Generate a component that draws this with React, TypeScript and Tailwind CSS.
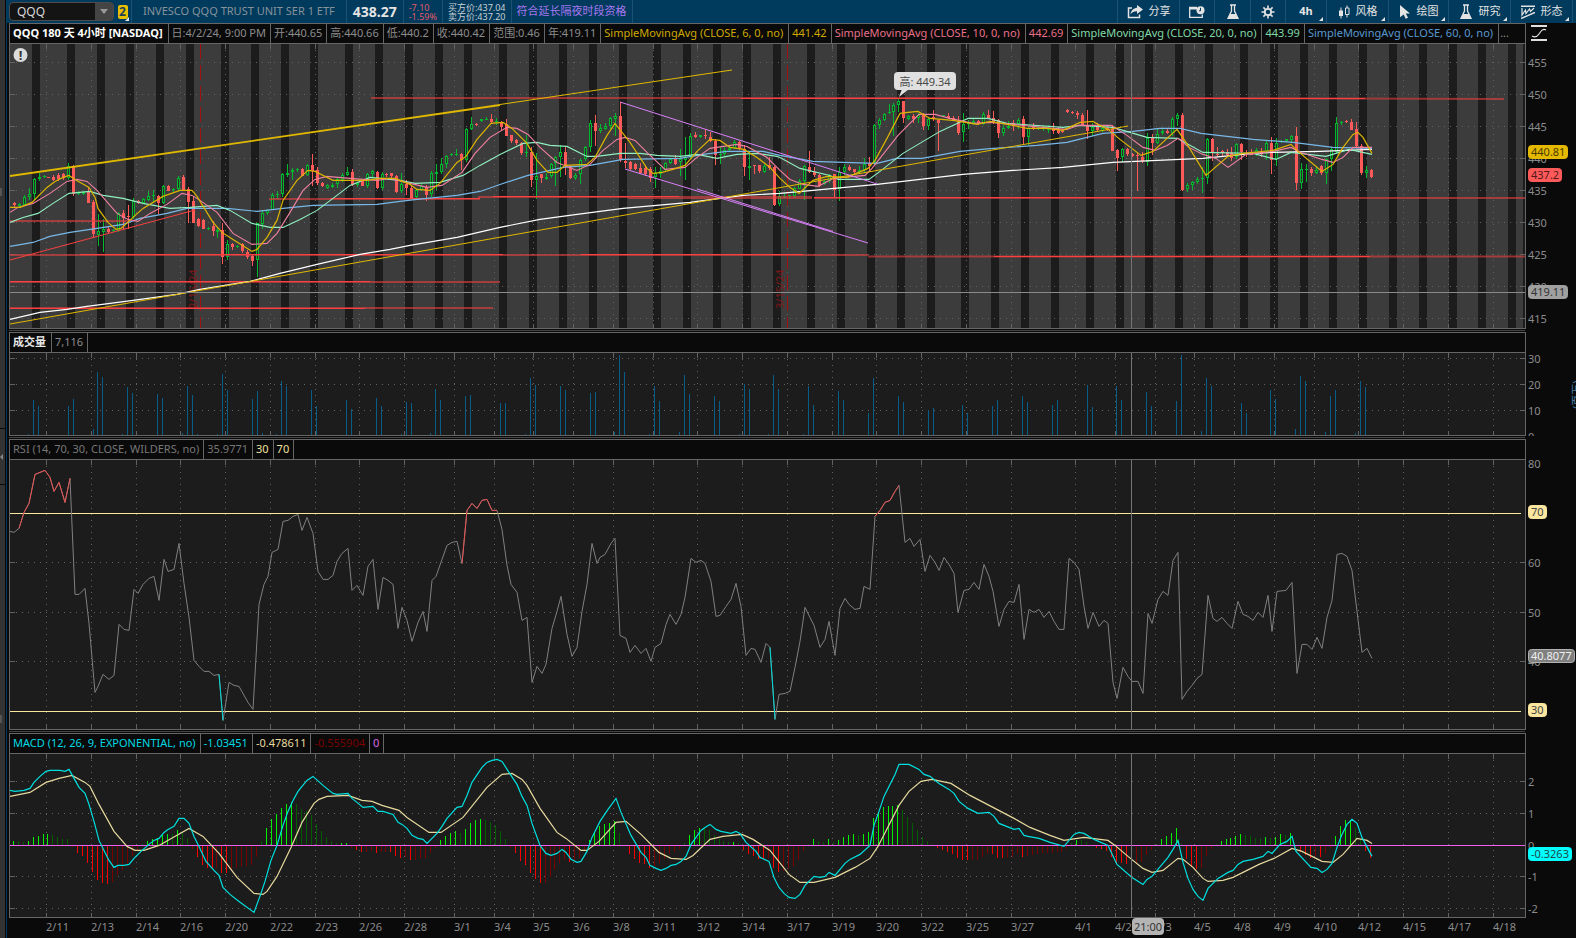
import type { ReactNode } from "react"

const BAR_START = 13.7
const BAR_STEP = 4.9706
const PLOT_LEFT = 10
const AXIS_LEFT = 1526
const CROSS_X = 1131.5

const barX = (i: number) => Math.floor(BAR_START + BAR_STEP * i + 0.5)

const DATES: [number, string][] = [
  [46, "2/11"], [91, "2/13"], [136, "2/14"], [180, "2/16"], [225, "2/20"], [270, "2/22"],
  [315, "2/23"], [359, "2/26"], [404, "2/28"], [454, "3/1"], [494, "3/4"], [533, "3/5"],
  [573, "3/6"], [613, "3/8"], [653, "3/11"], [697, "3/12"], [742, "3/14"], [787, "3/17"],
  [832, "3/19"], [876, "3/20"], [921, "3/22"], [966, "3/25"], [1011, "3/27"], [1075, "4/1"],
  [1115, "4/2"], [1155, "4/3"], [1194, "4/5"], [1234, "4/8"], [1274, "4/9"], [1314, "4/10"],
  [1358, "4/12"], [1403, "4/15"], [1448, "4/17"], [1493, "4/18"],
]

// left edge of every overnight gap, each 8px wide
const NIGHTS = [
  32, 67, 97, 126, 156, 186, 221, 251, 281, 310, 345, 375, 405, 435, 464, 499, 529, 559, 589, 619,
  653, 683, 713, 743, 773, 807, 837, 867, 897, 927, 961, 991, 1021, 1051, 1086, 1116, 1145, 1175,
  1205, 1240, 1270, 1300, 1329, 1359, 1389, 1419, 1449, 1478, 1508, 1523,
]

// up flag, high, body top, body bottom, low. Values are thirds of a pixel below y=60
const CANDLES = `
0,426,430,437,440 1,428,431,437,439 1,406,411,434,436 1,385,403,413,420 1,355,358,404,420
1,338,351,357,362 1,346,349,353,356 0,350,351,353,354 0,344,351,359,362 0,338,344,357,362
0,338,343,356,360 1,310,319,356,362 0,316,320,400,410 1,394,399,402,406 1,392,396,401,404
0,385,397,429,430 0,420,427,524,535 1,463,514,525,560 1,478,508,517,578 0,500,507,516,518
1,508,511,515,517 1,455,460,513,516 0,450,459,473,510 0,436,469,472,507 1,415,423,471,478
0,420,423,428,432 1,413,417,428,430 1,393,408,420,422 1,390,406,410,425 0,405,408,430,462
1,375,378,429,432 0,376,378,392,395 1,383,387,391,397 1,348,355,388,392 0,345,350,388,392
0,382,388,426,490 0,408,422,488,490 0,474,476,498,500 0,478,480,507,508 1,500,504,507,510
0,483,499,514,528 1,505,511,517,536 0,490,510,591,614 1,540,552,591,600 0,550,552,562,572
1,556,559,563,566 0,550,553,575,580 0,570,575,591,598 0,582,588,603,618 1,488,490,602,650
1,450,459,491,508 1,446,450,460,464 1,400,405,450,452 1,392,402,406,415 1,340,343,402,412
1,312,338,343,352 1,325,330,337,362 1,324,328,331,335 0,325,327,347,350 1,312,315,346,348
0,282,315,333,378 0,320,331,371,374 0,366,370,378,380 1,372,376,384,386 1,368,374,381,383
1,352,357,373,384 1,338,344,358,366 1,322,337,345,350 0,327,336,374,378 1,366,370,376,380
0,358,363,378,380 1,338,342,378,382 1,330,334,343,354 0,333,336,384,388 1,336,342,384,390
0,338,343,346,350 0,338,340,348,354 0,345,348,396,398 1,338,373,395,398 0,360,373,386,406
0,375,384,413,416 1,388,391,413,414 1,372,378,390,392 0,375,380,405,422 1,332,340,403,410
1,312,336,342,390 1,295,311,335,342 1,284,287,311,322 1,280,283,286,290 1,268,282,285,288
0,280,283,302,330 1,204,208,302,306 1,170,192,208,210 0,190,193,197,200 1,176,178,184,186
1,172,177,179,181 0,163,178,186,192 1,175,183,187,196 0,182,185,200,210 0,178,192,227,230
0,224,226,245,248 0,238,241,250,256 0,246,250,281,284 1,225,277,281,292 0,262,277,362,382
1,280,347,360,418 0,341,343,356,368 1,338,350,355,358 1,308,313,348,352 1,288,292,311,378
1,256,277,293,353 0,262,276,317,345 0,316,318,353,358 1,340,344,353,362 1,296,301,343,370
1,258,262,298,302 1,180,190,263,275 0,165,190,215,258 1,192,205,215,220 1,190,197,205,210
1,170,174,198,206 1,160,167,176,230 0,126,169,300,306 0,250,303,309,324 0,304,307,329,332
0,310,312,327,330 0,308,325,339,342 0,315,324,341,348 0,322,326,352,366 1,320,339,352,382
1,322,332,341,356 1,305,310,330,332 1,295,298,311,314 0,286,298,313,316 1,268,298,308,350
1,232,290,299,362 1,218,227,290,293 0,215,226,231,233 1,224,226,232,234 0,208,226,230,238
0,215,232,243,246 0,238,242,284,315 1,260,281,285,310 1,262,271,282,290 1,258,264,271,275
1,240,247,265,268 0,244,246,268,272 0,255,268,323,348 1,280,317,323,362 0,314,316,318,340
0,314,316,335,338 1,310,317,335,340 0,290,316,325,330 0,318,321,435,438 1,392,409,434,436
1,400,407,410,414 1,405,406,410,418 1,380,385,408,412 1,358,362,385,388 1,314,318,362,418
0,273,321,335,338 0,320,336,345,350 0,343,345,378,382 1,360,364,374,376 1,342,345,362,370
0,342,343,390,412 1,322,336,388,424 1,312,322,337,344 0,315,320,329,332 0,326,327,336,340
1,318,330,336,342 1,294,311,330,338 0,290,308,318,336 1,192,196,310,316 1,175,181,197,208
1,160,163,181,184 1,132,156,160,162 1,130,136,156,230 1,115,124,136,156 0,122,124,176,188
1,166,169,177,180 0,162,168,177,188 1,160,166,175,190 0,160,163,198,210 1,170,177,198,208
0,150,172,179,182 0,178,180,188,275 1,164,166,169,171 0,160,168,174,178 0,168,174,182,184
0,168,182,218,226 1,160,193,218,246 1,180,187,192,206 1,178,184,191,196 0,180,183,193,195
1,156,163,192,194 0,150,164,175,178 0,152,173,185,190 0,178,181,219,236 1,196,203,218,228
1,183,197,203,208 0,180,189,193,212 1,174,179,192,206 0,168,178,231,255 1,198,203,231,254
0,190,200,206,212 1,198,202,206,209 1,195,203,206,214 1,194,203,209,218 0,188,203,213,222
0,200,206,219,222 0,207,213,217,219 0,147,151,156,160 0,152,155,159,162 0,152,158,164,176
0,160,165,196,200 0,150,195,212,238 1,190,201,213,228 0,190,200,210,216 1,198,204,212,216
0,194,204,209,212 0,196,206,272,275 0,268,271,294,334 1,265,268,293,306 0,265,268,282,288
0,280,283,288,292 0,278,284,288,392 0,276,291,302,308 1,220,234,305,320 0,222,234,249,284
1,205,221,249,252 1,208,213,220,226 0,205,213,219,222 1,172,176,218,230 1,160,165,176,200
0,160,165,390,395 1,368,374,387,394 1,363,367,377,390 1,352,358,367,374 1,322,354,356,400
1,234,238,356,372 0,234,237,275,304 0,260,282,286,290 0,270,274,280,290 0,268,276,284,290
0,262,280,296,305 1,248,253,293,296 0,248,253,278,300 0,270,278,282,292 0,268,275,283,286
1,264,271,284,288 0,264,272,280,292 1,244,249,276,300 0,232,249,299,342 1,234,248,296,318
1,240,242,245,250 1,236,238,243,246 1,226,229,240,246 0,202,228,368,392 1,310,326,368,388
1,312,326,329,365 0,322,326,338,350 1,318,330,339,342 0,314,319,341,343 1,293,298,341,370
1,262,268,298,334 1,172,190,276,280 1,182,186,190,194 0,180,184,188,190 0,178,187,210,212
0,185,208,258,260 0,253,257,339,345 1,318,331,340,354 0,328,330,352,354`
  .trim()
  .split(/\s+/)
  .map((c) => c.split(",").map(Number))

const SMA6 =
  "10,207 20,207 32,202 47,187 55,181 63,177 69,175 75,179 89,187 95,197 98,208 108,222 116,229 121,228 133,217 143,208 163,196 180,190 192,190 197,196 205,209 213,222 222,232 233,239 252,251 257,249 267,237 277,220 283,200 297,180 308,170 315,171 333,180 350,180 367,180 380,178 395,178 410,184 417,189 430,190 440,183 457,162 466,156 477,139 491,123 503,122 512,128 527,143 537,160 548,172 557,172 565,165 587,164 595,157 607,135 615,123 630,142 647,168 653,173 662,172 673,169 685,165 697,151 710,139 720,140 730,147 744,149 757,157 770,167 780,178 790,187 799,193 813,180 827,176 847,177 868,168 875,160 887,138 900,113 908,112 918,111 930,118 953,120 977,124 990,121 1013,125 1027,128 1047,128 1063,130 1080,122 1093,121 1100,125 1108,129 1120,139 1141,155 1153,151 1167,138 1177,129 1186,142 1206,175 1228,156 1243,153 1273,150 1291,144 1298,151 1322,171 1333,164 1343,147 1353,134 1358,132 1363,137 1372,153"
const SMA10 =
  "10,212 18,207 33,203 50,193 67,181 77,179 87,181 97,190 117,213 128,219 138,221 150,213 167,204 182,193 192,195 200,200 217,212 233,233 252,244 267,243 277,233 290,212 303,190 315,179 327,176 350,178 377,180 390,178 410,183 427,187 442,185 462,172 475,153 490,137 507,127 517,128 528,134 540,147 557,162 577,170 590,164 603,150 617,139 625,137 635,140 648,153 665,169 685,167 697,157 710,148 737,144 747,146 767,157 780,170 790,179 803,184 818,186 833,178 865,175 872,168 898,135 919,114 935,114 950,118 973,123 990,122 1013,124 1053,128 1067,129 1078,125 1111,125 1127,135 1143,147 1155,150 1167,145 1178,138 1189,147 1203,154 1216,158 1228,167 1246,154 1273,151 1291,147 1301,152 1322,159 1333,162 1343,157 1353,147 1372,147"
const SMA20 =
  "10,222 23,217 38,213 53,203 69,193 90,191 103,195 123,198 143,203 170,208 190,207 217,205 230,210 252,223 270,227 283,227 300,219 317,210 333,198 350,185 370,177 400,180 415,183 440,182 463,175 480,165 500,154 523,143 537,142 550,145 567,146 587,156 597,156 620,153 640,153 657,155 680,156 697,154 717,158 737,154 757,153 777,156 780,157 800,168 830,175 838,179 869,179 880,171 903,153 940,131 957,123 968,118 988,118 1007,123 1063,127 1080,125 1113,127 1130,132 1147,137 1178,138 1183,141 1203,152 1253,153 1276,159 1291,152 1326,156 1349,149 1372,154"
const SMA60 =
  "10,246 33,242 50,236 70,232 97,228 123,224 140,218 167,213 187,208 227,208 257,211 283,208 313,205 377,204 400,201 417,199 457,195 480,191 500,184 528,175 563,167 590,165 623,159 680,158 703,154 727,151 763,151 780,155 813,161 843,162 877,163 897,158 922,158 960,151 993,148 1037,145 1067,142 1103,133 1133,131 1160,128 1180,128 1201,133 1253,139 1293,142 1333,147 1372,148"
const SMA200 =
  "10,319 40,312 67,309 87,306 133,300 177,294 200,289 250,281 280,273 317,264 360,254 390,249 410,245 457,237 500,227 540,219 577,214 623,208 690,202 743,195 780,193 813,190 877,184 963,174 1013,170 1063,167 1113,162 1180,159 1203,158 1253,153 1273,152 1320,151 1372,149"

// x, y of the bar top
const VOLUMES =
  "28,434 33,400 38,406 68,406 73,399 93,429 97,372 102,377 122,434 127,387 132,393 157,394 162,398 182,433 187,386 192,395 197,434 217,434 222,374 227,390 252,399 257,391 262,433 276,434 281,381 286,386 311,390 316,406 346,400 351,409 376,398 381,406 401,434 406,402 411,403 430,433 435,389 440,400 465,396 470,395 500,403 505,403 525,434 530,378 535,385 560,386 565,390 590,393 595,392 614,432 619,355 624,372 649,434 654,386 659,401 679,432 684,375 689,394 714,396 719,401 739,434 744,384 749,389 768,434 773,375 778,389 803,434 808,386 813,405 838,391 843,400 868,413 873,378 898,396 903,402 928,410 933,408 962,405 967,413 992,406 997,400 1022,396 1027,402 1052,405 1057,400 1087,385 1092,407 1116,386 1121,400 1146,392 1151,406 1176,401 1181,355 1201,431 1206,378 1211,386 1241,403 1246,413 1270,390 1275,399 1295,429 1300,376 1305,381 1325,432 1330,396 1335,390 1355,433 1360,381 1365,387"

const RSI =
  "10,531 14,532 19,528 24,512 29,503 35,474 40,472 45,470 50,477 54,491 59,482 65,502 70,478 75,594 79,594 85,588 89,623 95,692 98,686 103,674 109,679 114,675 119,624 124,629 129,630 134,589 138,593 143,584 149,578 154,576 159,600 164,559 168,571 174,569 179,543 184,583 189,617 194,660 199,666 204,671 209,671 214,675 219,674 223,720 229,682 234,685 239,686 248,702 253,709 259,604 264,584 268,576 272,552 278,549 283,521 288,520 293,516 298,514 302,530 307,517 313,533 318,571 323,579 328,579 333,575 337,561 342,553 348,548 352,590 357,585 363,595 368,566 373,559 378,609 383,577 388,580 393,584 398,628 402,607 407,620 412,641 418,622 423,611 427,631 432,580 436,576 442,559 447,545 452,542 457,541 462,563 467,510 472,503 477,508 482,500 487,499 492,510 497,510 502,529 507,565 511,584 517,592 522,620 527,617 532,682 537,666 542,673 546,664 552,628 557,611 561,596 567,634 572,656 577,647 582,611 587,584 592,543 597,563 600,557 605,554 611,543 615,538 620,635 626,638 630,652 635,645 641,653 646,648 651,661 655,647 661,643 666,624 670,614 676,624 681,614 685,597 691,558 696,562 701,560 705,563 711,581 716,616 720,615 726,606 731,599 736,583 741,606 746,655 751,648 755,649 761,662 766,643 770,647 775,719 779,694 785,693 790,691 795,667 800,641 805,607 810,617 814,625 820,647 825,639 829,621 835,655 840,608 845,598 849,604 855,609 860,608 864,586 870,589 875,516 880,510 885,502 890,500 895,491 899,485 905,542 910,538 914,546 920,539 925,571 930,555 935,562 939,570 944,557 949,564 954,573 958,612 964,590 969,589 974,582 979,589 984,564 989,576 993,591 999,626 1004,609 1009,601 1014,602 1019,584 1024,639 1029,609 1034,612 1039,609 1044,617 1049,611 1054,621 1059,629 1064,629 1069,558 1074,562 1079,569 1084,606 1088,628 1093,612 1099,626 1104,620 1108,623 1113,682 1117,698 1123,667 1128,676 1132,681 1138,681 1143,693 1148,613 1152,623 1158,599 1163,591 1168,595 1173,560 1178,552 1182,699 1187,691 1192,685 1197,678 1202,674 1208,595 1213,618 1217,621 1222,617 1227,623 1232,628 1238,601 1243,614 1248,616 1253,620 1258,612 1263,617 1268,595 1272,631 1277,591 1286,590 1292,582 1297,673 1302,644 1307,644 1312,649 1317,637 1322,648 1327,617 1332,600 1337,554 1342,553 1347,556 1352,570 1362,652 1367,648 1372,658"
const RSI_HIGH = [
  "19,528 24,512 29,503 35,474 40,472 45,470 50,477 54,491 59,482 65,502 70,478",
  "462,563 467,510 472,503 477,508 482,500 487,499 492,510 497,510",
  "875,516 880,510 885,502 890,500 895,491 899,485",
]
const RSI_LOW = ["219,674 223,720", "770,647 775,719"]

const MACD =
  "10,790 15,791 24,790 30,788 34,782 40,776 46,771 50,770 60,770 65,771 69,769 74,778 79,787 85,793 89,804 94,821 99,840 104,850 109,860 114,867 118,865 124,865 129,864 134,858 141,851 149,844 154,840 159,838 164,832 168,829 174,826 179,818 184,818 189,823 194,836 199,846 206,861 214,870 219,875 223,887 230,894 239,901 254,912 261,893 265,881 271,860 277,845 283,825 288,811 293,800 298,791 302,786 307,780 313,776 323,785 333,793 337,794 348,793 352,798 357,802 363,807 373,806 378,811 383,811 393,814 398,822 402,824 407,828 412,835 418,838 423,839 427,843 437,833 442,826 447,818 457,807 462,806 467,795 472,782 482,767 487,762 492,760 497,759 502,761 509,772 517,784 522,796 527,805 532,823 540,845 546,853 551,855 557,853 562,849 566,852 571,859 577,862 581,861 587,851 592,837 600,821 608,809 616,798 621,812 631,835 641,852 646,857 650,865 656,868 661,870 666,868 671,865 676,864 681,861 686,856 691,844 701,830 705,827 710,824 716,829 721,831 731,833 736,831 740,833 746,842 756,851 760,857 769,861 774,877 779,887 784,893 789,897 795,898 800,894 805,885 814,876 820,877 825,876 829,872 835,875 845,863 850,859 860,854 870,845 874,825 879,811 884,796 895,774 899,764 909,764 919,769 924,774 930,776 939,783 949,789 954,793 959,801 968,808 978,813 989,812 994,816 999,823 1009,827 1014,829 1019,828 1024,835 1028,836 1039,838 1050,842 1064,846 1074,834 1079,832 1084,833 1094,839 1108,845 1117,864 1132,877 1143,884 1147,879 1152,876 1168,857 1173,849 1178,840 1183,862 1188,878 1193,889 1198,896 1203,900 1208,888 1213,883 1218,878 1228,872 1233,870 1238,864 1243,861 1253,859 1263,856 1268,851 1272,853 1280,844 1287,841 1292,836 1296,851 1311,867 1317,868 1322,872 1327,869 1332,863 1337,847 1342,834 1347,824 1352,819 1357,823 1362,837 1372,856"
const SIGNAL =
  "10,796 30,792 46,782 59,778 72,775 85,782 90,786 99,804 114,831 127,846 135,850 144,850 159,845 189,828 203,836 219,853 237,877 254,893 263,894 267,891 277,876 291,847 302,822 314,803 319,799 327,796 348,795 362,800 372,801 382,805 399,810 407,817 429,832 441,832 463,817 487,787 502,774 512,773 522,779 527,785 540,808 557,832 566,838 581,850 587,850 599,841 616,822 626,821 641,834 659,852 671,858 686,859 693,855 710,839 723,836 742,834 753,839 770,850 789,874 800,882 814,882 835,877 855,867 870,858 878,846 899,805 909,791 921,781 932,779 951,783 970,795 993,807 1014,818 1030,827 1050,835 1064,840 1084,837 1108,840 1115,845 1128,856 1143,868 1152,872 1163,870 1178,858 1183,859 1193,867 1203,878 1208,881 1223,880 1233,877 1259,864 1274,858 1292,848 1302,851 1322,861 1333,862 1343,854 1357,838 1367,840 1372,843"

const parse = (s: string) => s.split(" ").map((p) => p.split(",").map(Number))

function valueAt(points: number[][], x: number) {
  const i = points.findIndex((p) => p[0] >= x)
  if (i <= 0) return points[i < 0 ? points.length - 1 : 0][1]
  const [x0, y0] = points[i - 1]
  const [x1, y1] = points[i]
  return y0 + ((y1 - y0) * (x - x0)) / (x1 - x0)
}

// histogram = macd line minus signal line, bright while it moves away from zero
const macdPoints = parse(MACD)
const signalPoints = parse(SIGNAL)
const HISTOGRAM = CANDLES.map((_, i) => {
  const x = barX(i)
  return { x, v: valueAt(signalPoints, x) - valueAt(macdPoints, x) }
}).map((b, i, all) => {
  const growing = i === 0 || Math.abs(b.v) >= Math.abs(all[i - 1].v)
  const color = b.v > 0 ? (growing ? "#00f000" : "#006000") : growing ? "#f80000" : "#780000"
  return { ...b, color }
})

function Line({ points, color, width = 1 }: { points: string; color: string; width?: number }) {
  return <polyline points={points} fill="none" stroke={color} strokeWidth={width} transform="translate(0 .4)" />
}

interface PlotProps {
  top: number
  height: number
  className: string
  levels: number[]
  label: string
  back?: ReactNode
  children: ReactNode
}

function Plot({ top, height, className, levels, label, back, children }: PlotProps) {
  return (
    <svg className={`block w-full bg-[#1c1c1c] ${className}`} role="img" aria-label={label}>
      <g transform={`translate(${-PLOT_LEFT} ${-top})`}>
        {back}
        <g shapeRendering="crispEdges" stroke="#626262">
          {DATES.map(([x]) => (
            <g key={x}>
              <line x1={x + 0.5} x2={x + 0.5} y1={top} y2={top + height} strokeDasharray="1 5" />
              <line x1={x + 0.5} x2={x + 0.5} y1={top} y2={top + 5} />
              <line x1={x + 0.5} x2={x + 0.5} y1={top + height - 4} y2={top + height} />
            </g>
          ))}
          {levels.map((y) => (
            <g key={y}>
              <line x1={PLOT_LEFT} x2="101%" y1={y + 0.5} y2={y + 0.5} strokeDasharray="1 5" />
              <line x1={PLOT_LEFT} x2={PLOT_LEFT + 5} y1={y + 0.5} y2={y + 0.5} />
            </g>
          ))}
        </g>
        {children}
        <line x1={CROSS_X} x2={CROSS_X} y1={top} y2={top + height} stroke="#747474" />
      </g>
      <g transform={`translate(-5 ${-top})`} stroke="#626262" shapeRendering="crispEdges">
        {levels.map((y) => (
          <line key={y} x1="100%" x2="101%" y1={y + 0.5} y2={y + 0.5} />
        ))}
      </g>
    </svg>
  )
}

interface Badge {
  y: number
  text: string
  width: number
  fill: string
  color: string
  stroke?: string
}

interface AxisProps {
  top: number
  className: string
  ticks: [number, string][]
  badges?: Badge[]
  children?: ReactNode
}

function Axis({ top, className, ticks, badges = [], children }: AxisProps) {
  return (
    <svg className={`block w-[50px] shrink-0 text-[11px] ${className}`}>
      <g transform={`translate(${-AXIS_LEFT} ${-top})`}>
        {ticks.map(([y, text]) => (
          <text key={text} x={1528} y={y + 5} fill="#8c8c8c">
            {text}
          </text>
        ))}
        {badges.map((b) => (
          <g key={b.text}>
            <rect
              x={1528.5}
              y={b.y + 0.5}
              width={b.width}
              height={13}
              rx={3}
              fill={b.fill}
              stroke={b.stroke ?? b.fill}
            />
            <text x={1531} y={b.y + 11} fill={b.color}>
              {b.text}
            </text>
          </g>
        ))}
        {children}
      </g>
    </svg>
  )
}

function Cell({ className, wide, children }: { className: string; wide?: boolean; children: ReactNode }) {
  return (
    <span
      className={`flex shrink-0 items-center border-r border-[#666] pb-[2px] pl-[3px] ${wide ? "pr-[5px]" : "pr-1"} ${className}`}
    >
      {children}
    </span>
  )
}

function Panel({ header, plot, axis }: { header: ReactNode; plot: ReactNode; axis: ReactNode }) {
  return (
    <section className="ml-[2px] flex">
      <div className="min-w-0 flex-1 border border-[#666]">
        <header className="flex h-5 overflow-hidden border-b border-[#666] text-[11px] leading-4 whitespace-nowrap">
          {header}
        </header>
        {plot}
      </div>
      {axis}
    </section>
  )
}

function Divider() {
  return (
    <div className="mr-[51px] ml-[2px] flex h-[3px] items-center">
      <div className="h-px w-full bg-[#444]" />
    </div>
  )
}

const Flask = () => (
  <svg className="h-4 w-[14px]" viewBox="0 0 14 16" aria-hidden="true">
    <path d="M4 1h6M5.500 1v6L2 14.300h10L8.500 7V1" fill="none" stroke="#e4e4e4" strokeWidth="1.300" />
    <path d="M4.300 10h5.400l2.600 5H1.700z" fill="#e4e4e4" />
  </svg>
)

const TOOLS: { label: string; width: string; text?: string; menu?: boolean; icon?: ReactNode }[] = [
  {
    label: "分享",
    text: "分享",
    width: "w-[62px]",
    icon: (
      <svg className="h-[14px] w-4" viewBox="0 0 16 14" aria-hidden="true">
        <path d="M5 3H1.500v9.500h11V9.500" fill="none" stroke="#e4e4e4" strokeWidth="1.500" />
        <path d="M10 0l6 4.500L10 9V6.300C7 6.200 5 7.200 3.500 9.500 4 5.500 6.500 3 10 2.700z" fill="#e4e4e4" />
      </svg>
    ),
  },
  {
    label: "计划",
    width: "w-[35px]",
    icon: (
      <svg className="h-3 w-4" viewBox="0 0 16 12" aria-hidden="true">
        <path d="M8 1.500H.7v9.800h12.600V8.500" fill="none" stroke="#e4e4e4" strokeWidth="1.300" />
        <path d="M1 1h7v2.500H1z" fill="#e4e4e4" />
        <circle cx="11.500" cy="4.200" r="4" fill="#e4e4e4" />
        <path d="M11.500 1.800v3h-1.500" fill="none" stroke="#003a5c" />
      </svg>
    ),
  },
  { label: "实验", width: "w-[36px]", icon: <Flask /> },
  {
    label: "设置",
    width: "w-[35px]",
    icon: (
      <svg className="h-[14px] w-[14px]" viewBox="0 0 14 14" aria-hidden="true">
        <circle cx="7" cy="7" r="3.200" fill="none" stroke="#e4e4e4" strokeWidth="1.800" />
        <path
          d="M7 .5v2.500M7 11v2.500M.5 7H3M11 7h2.500M2.400 2.400l1.800 1.800M9.800 9.800l1.800 1.800M2.400 11.600l1.800-1.800M9.800 4.200l1.800-1.800"
          stroke="#e4e4e4"
          strokeWidth="1.600"
        />
      </svg>
    ),
  },
  { label: "周期", text: "4h", width: "w-[41px]", menu: true },
  {
    label: "风格",
    text: "风格",
    width: "w-[62px]",
    menu: true,
    icon: (
      <svg className="h-[14px] w-3" viewBox="0 0 12 14" aria-hidden="true">
        <path d="M3 2.500v11M9 .5v12" stroke="#e4e4e4" />
        <path d="M1 5.500h4v5.500H1z" fill="#e4e4e4" />
        <path d="M7.500 3h3.500v6.500H7.500z" fill="#003a5c" stroke="#e4e4e4" />
      </svg>
    ),
  },
  {
    label: "绘图",
    text: "绘图",
    width: "w-[60px]",
    menu: true,
    icon: (
      <svg className="h-[14px] w-3" viewBox="0 0 12 14" aria-hidden="true">
        <path d="M1 0l10 8.500H6.800l2.200 4.300-2.300 1-2-4.400L1 12.300z" fill="#e4e4e4" />
      </svg>
    ),
  },
  { label: "研究", text: "研究", width: "w-[62px]", menu: true, icon: <Flask /> },
  {
    label: "形态",
    text: "形态",
    width: "w-[62px]",
    menu: true,
    icon: (
      <svg className="h-[14px] w-[14px]" viewBox="0 0 14 14" aria-hidden="true">
        <path d="M0 1.200h14M0 13.500l14-6" stroke="#e4e4e4" strokeWidth="1.500" />
        <path d="M1 3v7l3.500-5 .5 3.500L8.500 4l1 2.500L13 3" fill="none" stroke="#e4e4e4" strokeWidth="1.200" />
      </svg>
    ),
  },
]

function Toolbar() {
  return (
    <div className="flex h-[23px] items-stretch overflow-hidden bg-[#003a5c] pr-[3px] pl-[2px] whitespace-nowrap">
      <div className="my-[2px] flex w-[105px] shrink-0 items-center rounded-sm border border-[#4c4c4c] bg-[#141414]">
        <input
          aria-label="代码"
          defaultValue="QQQ"
          className="w-[85px] bg-transparent pl-[7px] text-xs leading-4 text-[#d8d8d8] outline-none"
        />
        <button aria-label="选择代码" className="flex h-full flex-1 items-center justify-center bg-[#444]">
          <svg className="h-[5px] w-2" viewBox="0 0 8 5" aria-hidden="true">
            <path d="M0 0h8L4 5z" fill="#999" />
          </svg>
        </button>
      </div>
      <button
        aria-label="关联组 2"
        className="relative flex w-[18px] shrink-0 items-center justify-center border-r border-[#1b5273]"
      >
        <span className="flex h-[14px] w-[10px] items-center justify-center rounded-xs bg-[#e8c000] text-xs leading-3 font-bold text-[#1f3f52]">
          2
        </span>
        <i className="absolute right-[2px] bottom-[2px] h-1 w-1 bg-[#e4e4e4] [clip-path:polygon(100%_0,100%_100%,0_100%)]" />
      </button>
      <span className="flex shrink-0 items-center border-r border-[#1b5273] px-[11px] text-[11px] text-[#87939b]">
        INVESCO QQQ TRUST UNIT SER 1 ETF
      </span>
      <strong className="flex shrink-0 items-center border-r border-[#1b5273] px-[6px] text-sm text-[#e4e4e4]">
        438.27
      </strong>
      <span className="flex shrink-0 flex-col justify-center border-r border-[#1b5273] px-[5px] text-[9px] leading-[9px] text-[#e05a68]">
        <span>-7.10</span>
        <span>-1.59%</span>
      </span>
      <span className="flex shrink-0 flex-col justify-center border-r border-[#1b5273] px-[5px] text-[9px] leading-[9px] text-[#c8d0d4]">
        <span>买方价:437.04</span>
        <span>卖方价:437.20</span>
      </span>
      <span className="flex shrink-0 items-center border-r border-[#1b5273] px-[5px] text-[11px] text-[#a878f0]">
        符合延长隔夜时段资格
      </span>
      <div className="ml-auto flex shrink-0 border-l border-[#1b5273]">
        {TOOLS.map((t) => (
          <button
            key={t.label}
            aria-label={t.label}
            className={`relative flex items-center justify-center gap-[6px] border-r border-[#1b5273] text-[11px] text-[#e4e4e4] ${t.width}`}
          >
            {t.icon}
            {t.text && <span className={t.text === "4h" ? "font-bold" : ""}>{t.text}</span>}
            {t.menu && (
              <i className="absolute right-[3px] bottom-[2px] h-1 w-1 bg-[#e4e4e4] [clip-path:polygon(100%_0,100%_100%,0_100%)]" />
            )}
          </button>
        ))}
      </div>
    </div>
  )
}

function PricePlot() {
  return (
    <Plot
      top={44}
      height={284}
      className="h-[284px]"
      label="QQQ 4小时 K线"
      levels={[62, 94, 126, 158, 190, 222, 254, 286, 318]}
      back={
        <>
          <rect x={PLOT_LEFT} y={44} width="100%" height={284} fill="#3c3c3c" />
          {NIGHTS.map((x) => (
            <rect key={x} x={x} y={44} width={8} height={284} fill="#1c1c1c" />
          ))}
        </>
      }
    >
      {/* option expiration days */}
      <g stroke="#a01010" strokeDasharray="15 6">
        <line x1={200.5} x2={200.5} y1={44} y2={328} />
        <line x1={787.5} x2={787.5} y1={44} y2={328} />
      </g>
      <g fill="#801818" fontSize={11}>
        <text transform="translate(197 309) rotate(-90)">2/16/24</text>
        <text transform="translate(784 309) rotate(-90)">3/15/24</text>
      </g>

      <g shapeRendering="crispEdges">
        {CANDLES.map(([up, high, top, bottom, low], i) => {
          const x = barX(i)
          const color = up ? "#00b82e" : "#ff5a5a"
          const y = Math.round(60 + top / 3)
          const h = Math.max(1, Math.round((bottom - top) / 3))
          return (
            <g key={i} fill={color}>
              <rect x={x} y={Math.round(60 + high / 3)} width={1} height={Math.round((low - high) / 3)} />
              <rect x={x - 1} y={y} width={3} height={h} />
              {up === 1 && h > 2 && <rect x={x} y={y + 1} width={1} height={h - 2} fill="#2b2b2b" />}
            </g>
          )
        })}
      </g>

      <g stroke="#e84040" strokeOpacity={0.6} strokeWidth={2}>
        <path d="M371 98H1190L1504 99" />
        <path d="M269 199H480M478 197H812M628 198H812M814 198H1526" />
        <path d="M10 221H130M10 255H868" />
        <path d="M10 282H500M10 308H493" />
        <path d="M868 256.500H1526" />
      </g>
      <g stroke="#fa4040" strokeWidth={1}>
        <path d="M741 98.500H1365M814 197.500H1215" />
        <path d="M80 254.500H503M581 254.500H803M994 256.500H1370" />
        <path d="M10 281.500H370M10 308.500H365M493 196.500H679M330 198.500H480" />
        <path d="M10 260L195 210" />
      </g>

      <Line points={SMA200} color="#ffffff" width={1.1} />
      <Line points={SMA60} color="#78b8e8" width={1.1} />
      <Line points={SMA20} color="#90f0c0" width={1.1} />
      <Line points={SMA10} color="#f080a0" width={1.1} />
      <Line points={SMA6} color="#dcb400" width={1.2} />

      <g stroke="#e0b800">
        <path d="M10 176L500 105" strokeWidth={1.800} />
        <path d="M500 104.500L732 70M10 324L1128 126" />
      </g>
      <g stroke="#d880f8">
        <path d="M620 102L877 184M625 169L868 243M697 189L833 231.500" />
      </g>

      <line x1={PLOT_LEFT} x2="101%" y1={292.5} y2={292.5} stroke="#8a8a8a" />

      <circle cx={20.5} cy={55} r={7} fill="#dcdcdc" />
      <text x={20.5} y={59.5} textAnchor="middle" fontSize={13} fontWeight={700} fill="#333">
        !
      </text>
      <path d="M902 89L899 97L909 89z" fill="#e0e0e0" />
      <rect x={894} y={72} width={62} height={18} rx={4} fill="#e0e0e0" />
      <text x={925} y={86} textAnchor="middle" fontSize={11} fill="#484848">
        高: 449.34
      </text>
    </Plot>
  )
}

export default function App() {
  return (
    <div className="flex min-h-screen bg-[#0a0a0a] font-['Noto_Sans','Noto_Sans_CJK_SC',sans-serif]">
      <aside className="mr-px flex w-[5px] shrink-0 flex-col bg-[#333]">
        <div className="mt-[188px] h-2 w-[2px] bg-[#555]" />
        <div className="mt-[232px] flex h-[57px] items-center border-y border-[#0a0a0a]">
          <svg className="h-[6px] w-[3px]" viewBox="0 0 3 6" aria-hidden="true">
            <path d="M3 0v6L0 3z" fill="#888" />
          </svg>
        </div>
        <div className="mt-[230px] h-2 w-[2px] bg-[#555]" />
      </aside>
      <div className="w-px shrink-0 bg-[#003a5c]" />

      <main className="min-w-0 flex-1">
        <Toolbar />

        <Panel
          header={
            <>
              <Cell wide className="font-bold text-white">QQQ 180 天 4小时 [NASDAQ]</Cell>
              <Cell className="text-[#8c8c8c]">日:4/2/24, 9:00 PM</Cell>
              <Cell className="text-[#8c8c8c]">开:440.65</Cell>
              <Cell className="text-[#8c8c8c]">高:440.66</Cell>
              <Cell className="text-[#8c8c8c]">低:440.2</Cell>
              <Cell className="text-[#8c8c8c]">收:440.42</Cell>
              <Cell className="text-[#8c8c8c]">范围:0.46</Cell>
              <Cell className="text-[#8c8c8c]">年:419.11</Cell>
              <Cell wide className="text-[#d0a800]">SimpleMovingAvg (CLOSE, 6, 0, no)</Cell>
              <Cell className="text-[#d0a800]">441.42</Cell>
              <Cell wide className="text-[#e87088]">SimpleMovingAvg (CLOSE, 10, 0, no)</Cell>
              <Cell className="text-[#e87088]">442.69</Cell>
              <Cell wide className="text-[#80d8a8]">SimpleMovingAvg (CLOSE, 20, 0, no)</Cell>
              <Cell className="text-[#80d8a8]">443.99</Cell>
              <Cell wide className="text-[#5898d0]">SimpleMovingAvg (CLOSE, 60, 0, no)</Cell>
              <span className="flex items-center px-px pb-[2px] text-[#8c8c8c]">...</span>
            </>
          }
          plot={<PricePlot />}
          axis={
            <Axis
              top={23}
              className="h-[306px]"
              ticks={[
                [62, "455"], [94, "450"], [126, "445"], [158, "440"], [190, "435"],
                [222, "430"], [254, "425"], [286, "420"], [318, "415"],
              ]}
              badges={[
                { y: 145, text: "440.81", width: 39, fill: "#e5b900", color: "#4a3c00" },
                { y: 168, text: "437.2", width: 33, fill: "#ff5a5a", color: "#501818" },
                { y: 285, text: "419.11", width: 39, fill: "#a0a0a0", color: "#333" },
              ]}
            >
              <path d="M1531 26h16M1531 40h16" stroke="#e0e0e0" strokeWidth={2} />
              <path d="M1532 36c3 2 5 1 7-2s4-6 7-4" fill="none" stroke="#e0e0e0" strokeWidth={1.2} />
            </Axis>
          }
        />
        <Divider />

        <Panel
          header={
            <>
              <Cell wide className="font-bold text-[#e8e8e8]">成交量</Cell>
              <Cell className="text-[#8c8c8c]">7,116</Cell>
            </>
          }
          plot={
            <Plot top={353} height={82} className="h-[82px]" levels={[358, 384, 410]} label="成交量">
              {parse(VOLUMES).map(([x, y]) => (
                <rect key={x} x={x} y={y} width={1} height={435 - y} fill="#085c88" />
              ))}
            </Plot>
          }
          axis={
            <Axis top={332} className="h-[104px]" ticks={[[358, "30"], [384, "20"], [410, "10"], [436, "0"]]}>
              <text transform="translate(1581 409) rotate(-90)" fill="#4880a8">
                (百万)
              </text>
            </Axis>
          }
        />
        <Divider />

        <Panel
          header={
            <>
              <Cell className="text-[#777]">RSI (14, 70, 30, CLOSE, WILDERS, no)</Cell>
              <Cell className="text-[#777]">35.9771</Cell>
              <Cell className="text-[#f0e0a0]">30</Cell>
              <Cell className="text-[#f0e0a0]">70</Cell>
            </>
          }
          plot={
            <Plot top={460} height={269} className="h-[269px]" levels={[562, 612, 661]} label="RSI">
              <path d="M10 513.500H1521M10 711.500H1521" stroke="#fae69e" />
              <Line points={RSI} color="#808080" />
              {RSI_HIGH.map((p) => (
                <Line key={p} points={p} color="#e85050" />
              ))}
              {RSI_LOW.map((p) => (
                <Line key={p} points={p} color="#00d8d8" />
              ))}
            </Plot>
          }
          axis={
            <Axis
              top={439}
              className="h-[291px]"
              ticks={[[463, "80"], [562, "60"], [612, "50"], [661, "40"]]}
              badges={[
                { y: 505, text: "70", width: 18, fill: "#fae69e", color: "#444" },
                { y: 649, text: "40.8077", width: 46, fill: "#808080", color: "#f0f0f0", stroke: "#b0b0b0" },
                { y: 703, text: "30", width: 18, fill: "#fae69e", color: "#444" },
              ]}
            />
          }
        />
        <Divider />

        <Panel
          header={
            <>
              <Cell className="text-[#00d8e0]">MACD (12, 26, 9, EXPONENTIAL, no)</Cell>
              <Cell className="text-[#00d8e0]">-1.03451</Cell>
              <Cell className="text-[#e6d99e]">-0.478611</Cell>
              <Cell className="text-[#780000]">-0.555904</Cell>
              <Cell className="text-[#d868e8]">0</Cell>
            </>
          }
          plot={
            <Plot top={754} height={163} className="h-[163px]" levels={[781, 813, 876, 908]} label="MACD">
              {HISTOGRAM.map(({ x, v, color }) => (
                <rect
                  key={x}
                  x={x - 1}
                  y={v > 0 ? 845 - Math.round(v) : 846}
                  width={1}
                  height={Math.round(Math.abs(v))}
                  fill={color}
                />
              ))}
              <line x1={PLOT_LEFT} x2="101%" y1={845.5} y2={845.5} stroke="#f060f0" />
              <Line points={SIGNAL} color="#e6d99e" width={1.2} />
              <Line points={MACD} color="#00e0e0" width={1.2} />
            </Plot>
          }
          axis={
            <Axis
              top={733}
              className="h-[185px]"
              ticks={[[781, "2"], [813, "1"], [845, "0"], [876, "-1"], [908, "-2"]]}
              badges={[{ y: 847, text: "-0.3263", width: 43, fill: "#00ffff", color: "#204848" }]}
            />
          }
        />

        <svg className="ml-[2px] block h-5 w-full text-[11px]">
          <g transform="translate(-9 -918)">
            {DATES.map(([x, text]) => (
              <text key={text} x={x} y={931} fill="#8c8c8c">
                {text}
              </text>
            ))}
            <rect x={1132} y={918} width={32} height={17} rx={4} fill="#b4b4b4" />
            <text x={1148} y={931} textAnchor="middle" fill="#333">
              21:00
            </text>
          </g>
        </svg>
      </main>
    </div>
  )
}
